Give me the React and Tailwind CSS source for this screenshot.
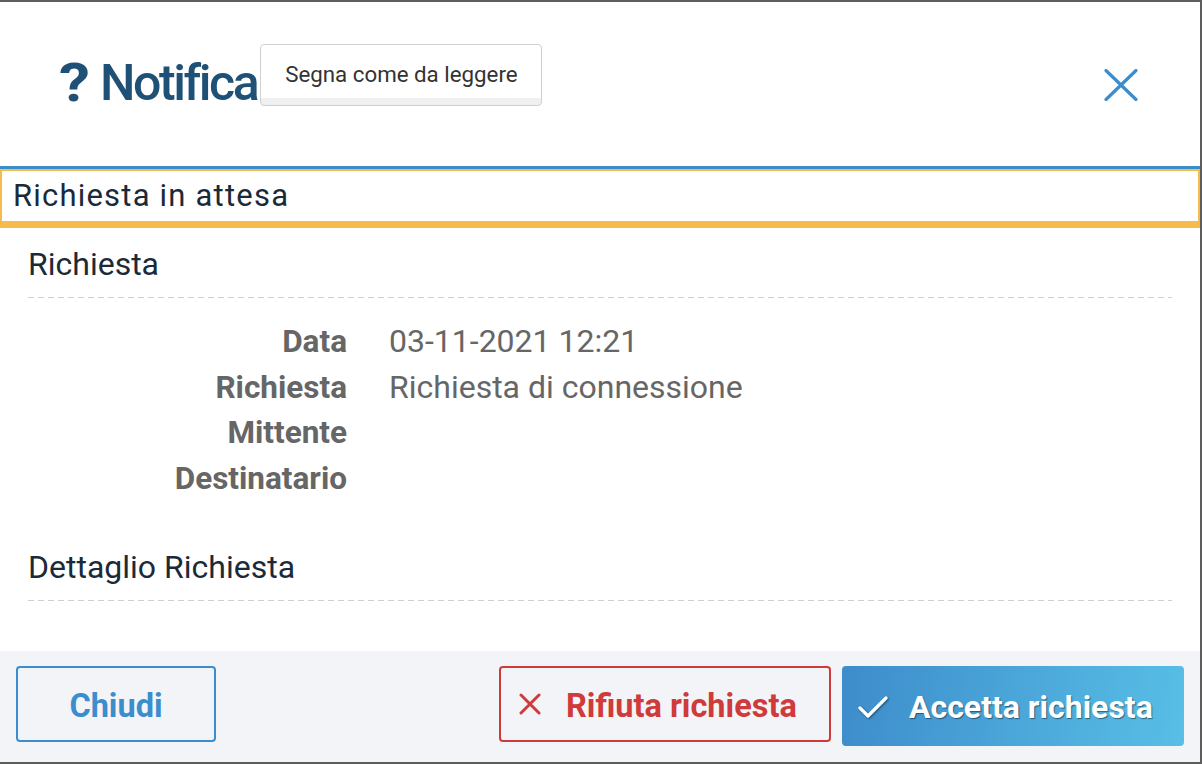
import React from "react";

function Dashed() {
  return (
    <div className="h-px w-full bg-[repeating-linear-gradient(to_right,#cfcfcf_0,#cfcfcf_6px,transparent_6px,transparent_10px)]" />
  );
}

export default function App() {
  const rows = [
    ["Data", "03-11-2021 12:21"],
    ["Richiesta", "Richiesta di connessione"],
    ["Mittente", ""],
    ["Destinatario", ""],
  ];
  return (
    <div className="w-[1202px] h-[764px] flex flex-col bg-white border-t-2 border-r-2 border-b-2 border-[#5d5d5d] font-['Roboto',sans-serif] overflow-hidden">
      {/* header */}
      <div className="h-[164px] flex items-start pl-[61px] pr-[62px]">
        <div className="flex items-start pt-[52px]">
          <span className="text-[54px] leading-[58px] font-bold text-[#1f5075] mr-[12px] scale-x-[1.15]">?</span>
          <span className="text-[50px] leading-[58px] font-medium tracking-[-2.4px] text-[#1f5075]">Notifica</span>
        </div>
        <button className="ml-[3px] mt-[42px] h-[62px] w-[282px] rounded-[4px] border border-[#cfcfcf] bg-[linear-gradient(to_bottom,#ffffff_0,#ffffff_88%,#f0f0f0_88%,#f0f0f0_100%)] text-[22.3px] text-[#333333]">
          Segna come da leggere
        </button>
        <div className="flex-1" />
        <svg className="mt-[67px]" width="34" height="32" viewBox="0 0 34 32">
          <path d="M2 1.5 L32 30.5 M32 1.5 L2 30.5" stroke="#3b8dcd" strokeWidth="3.2" strokeLinecap="round" fill="none" />
        </svg>
      </div>
      <div className="h-[3px] bg-[#3a8ccf]" />
      <div className="h-[59px] border-t-2 border-l-2 border-r-2 border-b-[7px] border-[#f5bb4b] flex items-center px-[11px]">
        <span className="text-[31px] tracking-[1.2px] text-[#1b2a39]">Richiesta in attesa</span>
      </div>

      {/* body */}
      <div className="flex-1 px-[28px] pt-[14px]">
        <div className="text-[32px] leading-[44px] text-[#1b2a39]">Richiesta</div>
        <div className="mt-[11px]"><Dashed /></div>
        <div className="grid grid-cols-[319px_1fr] gap-x-[42px] mt-[21px] text-[32px] leading-[45.5px] text-[#666666]">
          {rows.map(([k, v]) => (
            <React.Fragment key={k}>
              <div className="text-right font-bold text-[31.5px]">{k}</div>
              <div>{v || "\u00a0"}</div>
            </React.Fragment>
          ))}
        </div>
        <div className="mt-[44px] text-[32px] leading-[44px] text-[#1b2a39]">Dettaglio Richiesta</div>
        <div className="mt-[11px]"><Dashed /></div>
      </div>

      {/* footer */}
      <div className="h-[111px] bg-[#f3f4f8] flex items-start pt-[15px] px-[16px]">
        <button className="w-[200px] h-[76px] rounded-[4px] border-2 border-[#3b8dcd] pt-[4px] text-[32.5px] font-bold text-[#3b8dcd]">
          Chiudi
        </button>
        <div className="flex-1" />
        <button className="w-[332px] h-[76px] rounded-[4px] border-2 border-[#cf3a3a] flex items-center pt-[4px] pl-[18px] text-[32.5px] font-bold text-[#cf3a3a]">
          <svg width="22" height="22" viewBox="0 0 22 22" className="mr-[25px] -mt-[4px]">
            <path d="M2 2 L20 20 M20 2 L2 20" stroke="#cf3a3a" strokeWidth="3" strokeLinecap="round" fill="none" />
          </svg>
          Rifiuta richiesta
        </button>
        <button className="ml-[11px] w-[342px] h-[80px] rounded-[4px] bg-[linear-gradient(100deg,#3d8ccb_0%,#58bfe6_100%)] flex items-center pt-[1px] pl-[15px] text-[32px] font-bold text-white [text-shadow:1px_1px_1px_rgba(0,0,0,0.45)]">
          <svg width="32" height="26" viewBox="0 0 32 26" className="mr-[20px] drop-shadow-[1px_1px_1px_rgba(0,0,0,0.45)]">
            <path d="M3 14 L11 22 L29 4" stroke="#ffffff" strokeWidth="3.2" strokeLinecap="round" strokeLinejoin="round" fill="none" />
          </svg>
          Accetta richiesta
        </button>
      </div>
    </div>
  );
}
